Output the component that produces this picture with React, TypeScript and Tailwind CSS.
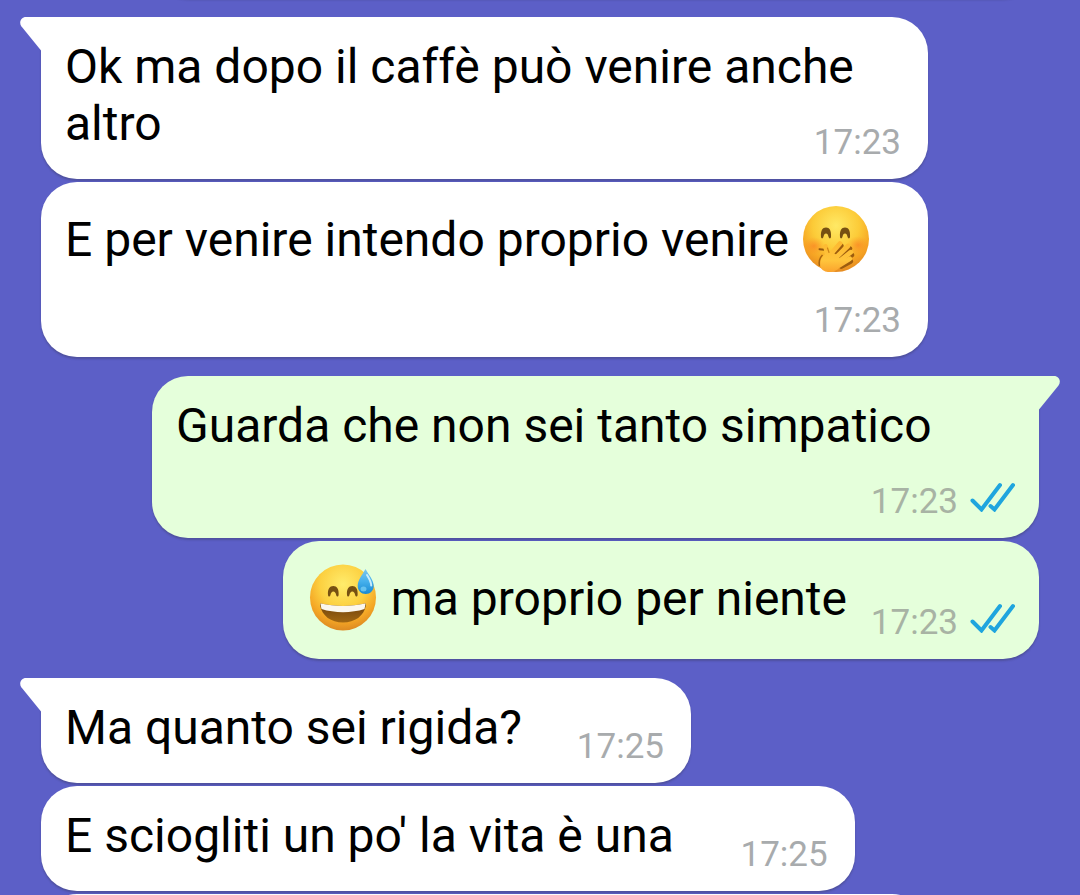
import clsx from "clsx";
import type { FC, ReactNode } from "react";

interface IMessage {
  text: ReactNode;
  time: string;
  own?: boolean;
  first?: boolean;
  // where the time goes relative to the last line of text
  meta: 'over' | 'below' | 'inline' | 'spaced';
}

const HandOverMouth: FC = () => (
  <svg role="img" aria-label="🤭" className="inline-block w-[72px] h-[70px] align-[-17px]" viewBox="2 0 72 70">
    <defs>
      <radialGradient id="handFace" cx="0.5" cy="0.3" r="0.7">
        <stop offset="0" stopColor="#ffe965" />
        <stop offset="0.5" stopColor="#fccb38" />
        <stop offset="0.8" stopColor="#f6a423" />
        <stop offset="1" stopColor="#e58b22" />
      </radialGradient>
      <radialGradient id="blush">
        <stop offset="0" stopColor="#fb7a22" stopOpacity="0.6" />
        <stop offset="1" stopColor="#fb8a22" stopOpacity="0" />
      </radialGradient>
      <linearGradient id="hand" gradientUnits="userSpaceOnUse" x1="0" y1="40" x2="0" y2="69">
        <stop offset="0" stopColor="#fdb931" />
        <stop offset="0.6" stopColor="#ffc53c" />
        <stop offset="1" stopColor="#fba32d" />
      </linearGradient>
    </defs>
    <circle cx="37" cy="36" r="33" fill="url(#handFace)" />
    <ellipse cx="15" cy="43" rx="11" ry="9" fill="url(#blush)" />
    <ellipse cx="59" cy="42" rx="11" ry="9" fill="url(#blush)" />
    <path d="M22 34C21.500 27.500 23.500 24.500 27 24.500S32.500 27.500 32 34C31.800 35.800 30.200 35.800 29.700 34.300C29 31.500 28.300 30.500 27 30.500S25 31.500 24.300 34.300C23.900 35.800 22.200 35.800 22 34ZM41 34C40.500 27.500 42.500 24.500 46 24.500S51.500 27.500 51 34C50.800 35.800 49.200 35.800 48.700 34.300C48 31.500 47.300 30.500 46 30.500S44 31.500 43.300 34.300C42.900 35.800 41.200 35.800 41 34Z" fill="#765012" />
    <path d="M20.500 46.200L25.500 46.800" stroke="#93570f" strokeWidth="2" strokeLinecap="round" />
    <g stroke="#9c5c0e" strokeWidth="4.800" strokeLinecap="round">
      <path d="M34 52L42.200 42.700" />
      <path d="M38.500 56.500L50.800 45.500" />
      <path d="M41.500 60L52.800 52" />
      <path d="M42.500 63.500L51.800 58.500" />
    </g>
    <path d="M20.500 63C19.500 58 20.500 55 23.500 52" stroke="#a8660f" strokeWidth="1.500" fill="none" />
    <path d="M21.500 64C20.500 59 22 55 25 52L31 48L38 52L42 57C42 62 41 64.500 38.500 66.500C33 70.500 24 70 21.500 64Z" fill="url(#hand)" />
    <g stroke="url(#hand)" strokeWidth="4.800" strokeLinecap="round">
      <path d="M29.500 56L26.500 43.500" />
      <path d="M31 52L41 40.500" />
      <path d="M37 54.500L49 43" />
      <path d="M40 58.500L51.800 49.200" />
      <path d="M40 62.500L50.800 55.700" />
    </g>
    <path d="M28.500 45L30 49.500" stroke="#cf8517" strokeWidth="1.200" strokeLinecap="round" />
  </svg>
)

const GrinSweat: FC = () => (
  <svg role="img" aria-label="😅" className="inline-block w-[72px] h-[70px] align-[-17px]" viewBox="1 0 72 70">
    <defs>
      <radialGradient id="sweatFace" cx="0.5" cy="0.3" r="0.7">
        <stop offset="0" stopColor="#ffec6c" />
        <stop offset="0.5" stopColor="#fcd040" />
        <stop offset="0.8" stopColor="#f4a625" />
        <stop offset="1" stopColor="#dd8a22" />
      </radialGradient>
      <linearGradient id="mouth" x1="0" y1="0" x2="0" y2="1">
        <stop offset="0" stopColor="#6b3f0c" />
        <stop offset="1" stopColor="#a56a13" />
      </linearGradient>
      <linearGradient id="drop" x1="0" y1="0" x2="0" y2="1">
        <stop offset="0" stopColor="#7cc6ee" />
        <stop offset="0.5" stopColor="#45b0ec" />
        <stop offset="1" stopColor="#1889d2" />
      </linearGradient>
      <clipPath id="mouthClip">
        <path d="M15 41.500c14 3.200 30 3.200 44 0 .8 0 1.200.5 1 1.500C58 54 49 60.500 37 60.500S16 54 14 43c-.2-1 .2-1.500 1-1.500z" />
      </clipPath>
    </defs>
    <circle cx="37" cy="35.500" r="33" fill="url(#sweatFace)" />
    <path d="M22 33C21.500 27 23.800 24 27.300 24S33.100 27 32.600 33C32.300 35 30.700 35 30.300 33.500C29.600 30.500 28.800 29.500 27.300 29.500S25 30.500 24.300 33.500C23.900 35 22.300 35 22 33ZM41 33C40.500 27 42.800 24 46.300 24S52.100 27 51.600 33C51.300 35 49.700 35 49.300 33.500C48.600 30.500 47.800 29.500 46.300 29.500S44 30.500 43.300 33.500C42.900 35 41.300 35 41 33Z" fill="#765012" />
    <g clipPath="url(#mouthClip)">
      <rect x="12" y="40" width="50" height="22" fill="url(#mouth)" />
      <path d="M14 40h46l-1.500 7c-13 4.200-30 4.200-43 0z" fill="#fbf7ee" />
    </g>
    <path d="M59.500 7c-3 5.500-7.800 11-7.800 17 0 4.700 3.500 8 8 8s8-3.300 8-8c0-6-5.200-11.500-8.200-17z" fill="url(#drop)" />
    <path d="M61 13c2.500 4 4.200 7 4.200 10.500" fill="none" stroke="#c9ecfb" strokeWidth="2" strokeLinecap="round" />
    <ellipse cx="57.500" cy="27" rx="3" ry="2.500" fill="#7fd3f7" opacity="0.7" />
  </svg>
)

const ReadTicks: FC = () => (
  <svg role="img" aria-label="Letto" className="w-[46px] h-[30px]" viewBox="0 0 46 30">
    <path d="M2.500 18.500L11.500 27.500L30 3M20.500 24L24.500 27.500L43 3" fill="none" stroke="#1fa5de" strokeWidth="4" strokeLinecap="round" />
  </svg>
)

const Tail: FC<{ own?: boolean }> = ({ own }) => (
  <svg
    aria-hidden="true"
    className={clsx(
      "absolute top-0 w-[22px] h-[34px]",
      own ? "left-full -ml-px -scale-x-100 text-[#e5ffdb]" : "right-full -mr-px text-white"
    )}
    viewBox="0 0 22 34"
  >
    <path d="M22 0H6C1 0-1.500 5.500 1.500 9.500L21 33.500H22Z" fill="currentColor" />
  </svg>
)

const Message: FC<IMessage> = ({ text, time, own, first, meta }) => (
  <article
    className={clsx(
      "relative grid rounded-[36px] pt-[21px] pb-[27px] pl-6 shadow-[0_2px_2px_rgba(40,40,40,0.25)] max-w-[887px]",
      own ? "self-end bg-[#e5ffdb] pr-[23px]" : "self-start bg-white pr-[27px]",
      first && (own ? "rounded-tr-none" : "rounded-tl-none"),
      first ? "mt-[19px]" : "mt-[3px]",
      (meta === 'over' || meta === 'below') && "w-full"
    )}
  >
    {first && <Tail own={own} />}
    <p
      className={clsx(
        "col-start-1 row-start-1 text-[48px] leading-[57px] text-black",
        meta === 'below' && "pb-[57px]",
        meta === 'inline' && "pr-[169px]",
        meta === 'spaced' && "pr-[142px]"
      )}
    >
      {text}
    </p>
    <div
      className={clsx(
        "col-start-1 row-start-1 self-end justify-self-end flex items-start gap-3 -mb-[11px] text-[35px] leading-[40px]",
        own ? "text-[#a8b3a4]" : "text-[#a8abad]"
      )}
    >
      <time>{time}</time>
      {own && <ReadTicks />}
    </div>
  </article>
)

const messages: IMessage[] = [
  { text: "Ok ma dopo il caffè può venire anche altro", time: "17:23", first: true, meta: 'over' },
  { text: <>E per venire intendo proprio venire <HandOverMouth /></>, time: "17:23", meta: 'below' },
  { text: "Guarda che non sei tanto simpatico", time: "17:23", own: true, first: true, meta: 'below' },
  { text: <><GrinSweat /> ma proprio per niente</>, time: "17:23", own: true, meta: 'inline' },
  { text: "Ma quanto sei rigida?", time: "17:25", first: true, meta: 'spaced' },
  { text: "E sciogliti un po' la vita è una\u00a0", time: "17:25", meta: 'spaced' },
];

export default function App() {
  return (
    <main className="h-screen overflow-hidden bg-[#5c5fc7] px-[41px] font-['Roboto',sans-serif]">
      <div className="flex flex-col">
        {/* end of the previous message */}
        <div className="-mt-[82px] h-20 w-full max-w-[887px] shrink-0 self-end rounded-[36px] bg-[#e5ffdb] shadow-[0_2px_2px_rgba(40,40,40,0.25)]" />
        {messages.map((message, i) => <Message key={i} {...message} />)}
        {/* start of the next one */}
        <div className="mt-[3px] h-20 w-full max-w-[887px] shrink-0 rounded-[36px] bg-white" />
      </div>
    </main>
  )
}
